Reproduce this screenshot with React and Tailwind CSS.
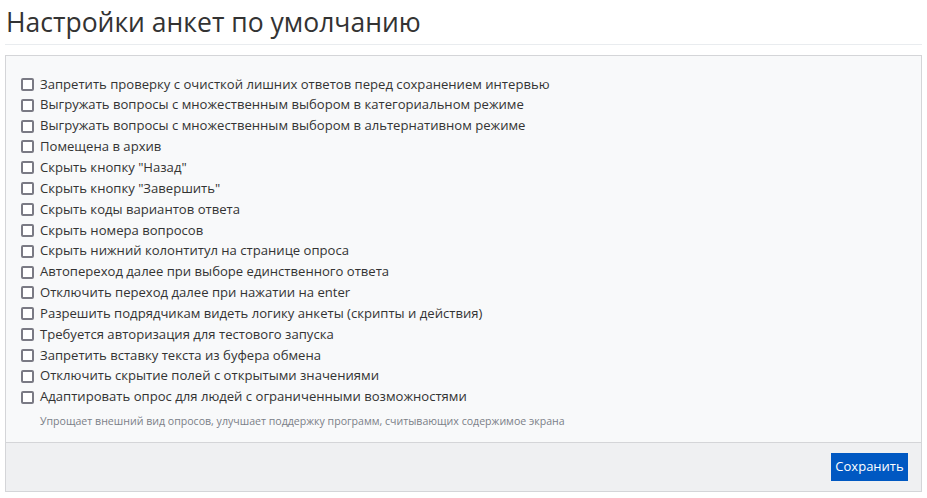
const options = [
  "Запретить проверку с очисткой лишних ответов перед сохранением интервью",
  "Выгружать вопросы с множественным выбором в категориальном режиме",
  "Выгружать вопросы с множественным выбором в альтернативном режиме",
  "Помещена в архив",
  'Скрыть кнопку "Назад"',
  'Скрыть кнопку "Завершить"',
  "Скрыть коды вариантов ответа",
  "Скрыть номера вопросов",
  "Скрыть нижний колонтитул на странице опроса",
  "Автопереход далее при выборе единственного ответа",
  "Отключить переход далее при нажатии на enter",
  "Разрешить подрядчикам видеть логику анкеты (скрипты и действия)",
  "Требуется авторизация для тестового запуска",
  "Запретить вставку текста из буфера обмена",
  "Отключить скрытие полей с открытыми значениями",
  "Адаптировать опрос для людей с ограниченными возможностями",
];

export default function App() {
  return (
    <div className="px-[5px] pt-[6px] font-['Open_Sans',sans-serif] text-[#333]">
      {/* Title */}
      <h1 className="text-[26.5px] leading-[32px] font-normal pl-px pb-[6px] border-b border-[#e9ecef]">
        Настройки анкет по умолчанию
      </h1>

      {/* Panel */}
      <div className="mt-[10px] w-[917px] border border-[#d4d5d8] bg-[#f8f9fa]">
        <div className="px-[15px] pt-[18px] pb-[13px]">
          {options.map((label) => (
            <label
              key={label}
              className="flex items-center gap-[6px] h-[20.85px] text-[13.1px] text-[#333]"
            >
              <span className="w-[13px] h-[13px] shrink-0 rounded-[2px] border-2 border-[#7a7a84] bg-white" />
              {label}
            </label>
          ))}
          <p className="pl-[19px] mt-[5px] text-[10.6px] leading-[16px] text-[#7b8088]">
            Упрощает внешний вид опросов, улучшает поддержку программ, считывающих содержимое экрана
          </p>
        </div>

        {/* Footer */}
        <div className="flex justify-end items-center h-[49px] px-[13px] border-t border-[#d4d5d8] bg-[#eff0f2]">
          <button className="h-[28px] w-[77px] bg-[#0058c2] text-white text-[13px] font-['Open_Sans',sans-serif]">
            Сохранить
          </button>
        </div>
      </div>
    </div>
  );
}
